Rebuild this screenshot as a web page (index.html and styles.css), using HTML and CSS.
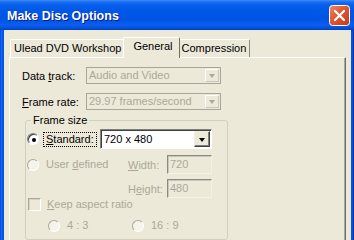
FILE: index.html
```html
<!DOCTYPE html>
<html lang="en">

<head>
    <meta charset="UTF-8">
    <title>Make Disc Options</title>
    <link rel="stylesheet" href="styles.css">
</head>

<body>

    <div class="window">
        <div class="titlebar">
            <span class="title">Make Disc Options</span>
            <button class="close" aria-label="Close">
                <svg width="21" height="21" viewBox="0 0 21 21">
                    <defs>
                        <linearGradient id="closeFill" x1="0" y1="0" x2="1" y2="1">
                            <stop offset="0" stop-color="#f08a6c"/>
                            <stop offset="0.45" stop-color="#e2552f"/>
                            <stop offset="1" stop-color="#c13a17"/>
                        </linearGradient>
                    </defs>
                    <rect x="0.5" y="0.5" width="20" height="20" rx="3" fill="url(#closeFill)" stroke="#fff"/>
                    <path d="M6 6 L15 15 M15 6 L6 15" stroke="#fff" stroke-width="2.2" stroke-linecap="round"/>
                </svg>
            </button>
        </div>

        <div class="client">
            <div class="tabs">
                <div class="tab">Ulead DVD Workshop</div>
                <div class="tab active">General</div>
                <div class="tab">Compression</div>
            </div>

            <div class="panel">
                <div class="field">
                    <label class="field-label">Data <u>t</u>rack:</label>
                    <div class="combo wide disabled">
                        <span class="combo-text">Audio and Video</span>
                        <span class="drop"></span>
                    </div>
                </div>
                <div class="field">
                    <label class="field-label"><u>F</u>rame rate:</label>
                    <div class="combo wide disabled">
                        <span class="combo-text">29.97 frames/second</span>
                        <span class="drop"></span>
                    </div>
                </div>

                <fieldset class="group">
                    <legend>Frame size</legend>

                    <div class="row row-standard">
                        <div class="opt opt-short">
                            <span class="radio checked"></span>
                            <span class="opt-label focused"><u>S</u>tandard:</span>
                        </div>
                        <div class="combo size">
                            <span class="combo-text">720 x 480</span>
                            <span class="drop"></span>
                        </div>
                    </div>

                    <div class="row row-user">
                        <div class="opt opt-long">
                            <span class="radio"></span>
                            <span class="opt-label dim">User <u>d</u>efined</span>
                        </div>
                        <span class="dim-label"><u>W</u>idth:</span>
                        <div class="textbox">720</div>
                    </div>

                    <div class="row row-height">
                        <div class="opt-long"></div>
                        <span class="dim-label">H<u>e</u>ight:</span>
                        <div class="textbox">480</div>
                    </div>

                    <div class="row row-check">
                        <span class="checkbox"></span>
                        <span class="opt-label dim"><u>K</u>eep aspect ratio</span>
                    </div>

                    <div class="row row-ratio">
                        <div class="opt opt-ratio">
                            <span class="radio"></span>
                            <span class="opt-label dim">4 : 3</span>
                        </div>
                        <div class="opt">
                            <span class="radio"></span>
                            <span class="opt-label dim">16 : 9</span>
                        </div>
                    </div>
                </fieldset>
            </div>
        </div>
    </div>

</body>

</html>
```

FILE: styles.css
```css
body {
    margin: 0;
    height: 240px;
    overflow: hidden;
    background-color: #0054e3;
    font-family: "Liberation Sans", Arial, sans-serif;
    font-size: 11px;
    color: #000;
}

u {
    text-decoration: underline;
    text-underline-offset: 1px;
}

.window {
    width: 354px;
    height: 280px;
    display: flex;
    flex-direction: column;
    background: linear-gradient(to right, #0831d9 0, #166aee 1px, #0055e5 3px, #0055e5 351px, #0a4fd8 353px, #00138c 354px);
}

/* title bar */

.titlebar {
    flex: none;
    height: 30px;
    display: flex;
    align-items: center;
    padding: 0 4px 0 7px;
    background: linear-gradient(to bottom, #3d8df5 0, #1a6df0 2px, #0760ec 5px, #0058e8 10px, #0054e3 19px, #0a5ef0 25px, #0351dc 28px, #003fbe 30px);
}

.title {
    flex: 1;
    padding-top: 1px;
    color: white;
    font-weight: bold;
    font-size: 12.5px;
    text-shadow: 1px 1px #0a1883;
}

.close {
    width: 21px;
    height: 21px;
    padding: 0;
    border: none;
    background: none;
    display: block;
}

.close svg {
    display: block;
}

/* dialog body */

.client {
    flex: 1;
    margin: 0 3px 0 4px;
    padding: 7px 5px 0 5px;
    background-color: #ece9d8;
    display: flex;
    flex-direction: column;
}

.tabs {
    display: flex;
    align-items: flex-end;
    padding-left: 1px;
}

.tab {
    height: 17px;
    line-height: 16px;
    padding: 0 3px;
    border: 1px solid;
    border-color: #fff #8d8b7f transparent #fff;
    border-bottom: none;
    border-radius: 2px 2px 0 0;
    background-color: #ece9d8;
    white-space: nowrap;
}

.tab.active {
    position: relative;
    z-index: 1;
    height: 20px;
    line-height: 17px;
    margin: 0 -2px -1px -2px;
    padding: 0 6px 0 9px;
    border-right-color: #716f64;
}

.panel {
    flex: 1;
    border: 1px solid;
    border-color: #fff #716f64 #716f64 #fff;
    box-shadow: inset -1px -1px #aca899;
    padding: 9px 0 0 12px;
}

.field {
    display: flex;
    align-items: center;
    margin-bottom: 9px;
}

.field-label {
    width: 64px;
    flex: none;
    white-space: nowrap;
}

/* combo boxes */

.combo {
    display: flex;
    align-items: stretch;
    box-sizing: border-box;
    border: 1px solid;
    border-color: #808080 #fff #fff #808080;
    box-shadow: inset 1px 1px #404040;
    background-color: white;
    padding: 1px 1px 1px 2px;
}

.combo.wide {
    width: 135px;
    height: 17px;
}

.combo.size {
    width: 112px;
    height: 20px;
}

.combo.disabled {
    border-color: #a7a698;
    box-shadow: none;
    background-color: #ece9d8;
    color: #aca899;
    padding: 0 1px 0 2px;
}

.combo-text {
    flex: 1;
    line-height: 15px;
    white-space: nowrap;
    overflow: hidden;
}

.combo.size .combo-text {
    line-height: 16px;
    padding-left: 1px;
}

.drop {
    flex: none;
    width: 14px;
    box-sizing: border-box;
    border: 1px solid;
    border-color: #f1efe2 #404040 #404040 #f1efe2;
    box-shadow: inset -1px -1px #808080;
    background-color: #ece9d8;
    display: flex;
    align-items: center;
    justify-content: center;
}

.drop::after {
    content: "";
    border-left: 3.5px solid transparent;
    border-right: 3.5px solid transparent;
    border-top: 4px solid #000;
    margin: 1px 1px 0 0;
}

.combo.size .drop {
    width: 16px;
}

.combo.disabled .drop {
    width: 14px;
    margin: 1px 0;
    border-color: #fff #c9c7ba #c9c7ba #fff;
    box-shadow: none;
}

.combo.disabled .drop::after {
    border-top-color: #aca899;
}

/* frame size group */

.group {
    width: 203px;
    box-sizing: border-box;
    margin: -5px 0 0 3px;
    padding: 0 0 7px 0;
    border: 1px solid #d0d0bf;
    border-radius: 3px;
}

.group legend {
    margin-left: 5px;
    padding: 0 2px;
    line-height: 13px;
}

.row {
    display: flex;
    align-items: center;
}

.row-standard {
    height: 20px;
    margin-top: 2px;
}

.row-user {
    height: 19px;
    margin-top: 6px;
}

.row-height {
    height: 19px;
    margin-top: 5px;
}

.row-check {
    height: 13px;
    padding-left: 2px;
}

.row-ratio {
    height: 13px;
    margin-top: 8px;
    padding-left: 22px;
}

.opt {
    display: flex;
    align-items: center;
    flex: none;
}

.opt-short {
    width: 74px;
    padding-left: 1px;
    box-sizing: border-box;
}

.opt-long {
    width: 101px;
    flex: none;
    padding-left: 1px;
    box-sizing: border-box;
}

.opt-ratio {
    width: 84px;
}

.opt-label {
    border: 1px solid transparent;
    padding: 0 2px;
    line-height: 13px;
    white-space: nowrap;
}

.opt-label.focused {
    border: 1px dotted #000;
}

.dim,
.dim-label {
    color: #aca899;
}

.dim-label {
    width: 40px;
    flex: none;
    padding-left: 1px;
    box-sizing: border-box;
}

/* radios, checkbox, text boxes */

.radio {
    width: 12px;
    height: 12px;
    box-sizing: border-box;
    flex: none;
    border-radius: 50%;
    border: 1px solid;
    border-color: #aca899 #fff #fff #aca899;
    background-color: #f5f4ea;
    margin-right: 4px;
    display: flex;
    align-items: center;
    justify-content: center;
}

.radio.checked {
    border-color: #808080 #fff #fff #808080;
    box-shadow: inset 1px 1px #404040;
    background-color: white;
}

.radio.checked::after {
    content: "";
    width: 4px;
    height: 4px;
    border-radius: 50%;
    background-color: #000;
    margin: 1px 0 0 1px;
}

.checkbox {
    width: 13px;
    height: 13px;
    box-sizing: border-box;
    flex: none;
    border: 1px solid;
    border-color: #aca899 #fff #fff #aca899;
    box-shadow: inset 1px 1px #d6d3c6;
    background-color: #ece9d8;
    margin-right: 3px;
}

.textbox {
    width: 45px;
    height: 19px;
    box-sizing: border-box;
    flex: none;
    border: 1px solid;
    border-color: #8c8a80 #f4f2e8 #f4f2e8 #8c8a80;
    box-shadow: inset 1px 1px #c9c7ba;
    background-color: #ece9d8;
    color: #aca899;
    padding-left: 2px;
    line-height: 16px;
}
```
